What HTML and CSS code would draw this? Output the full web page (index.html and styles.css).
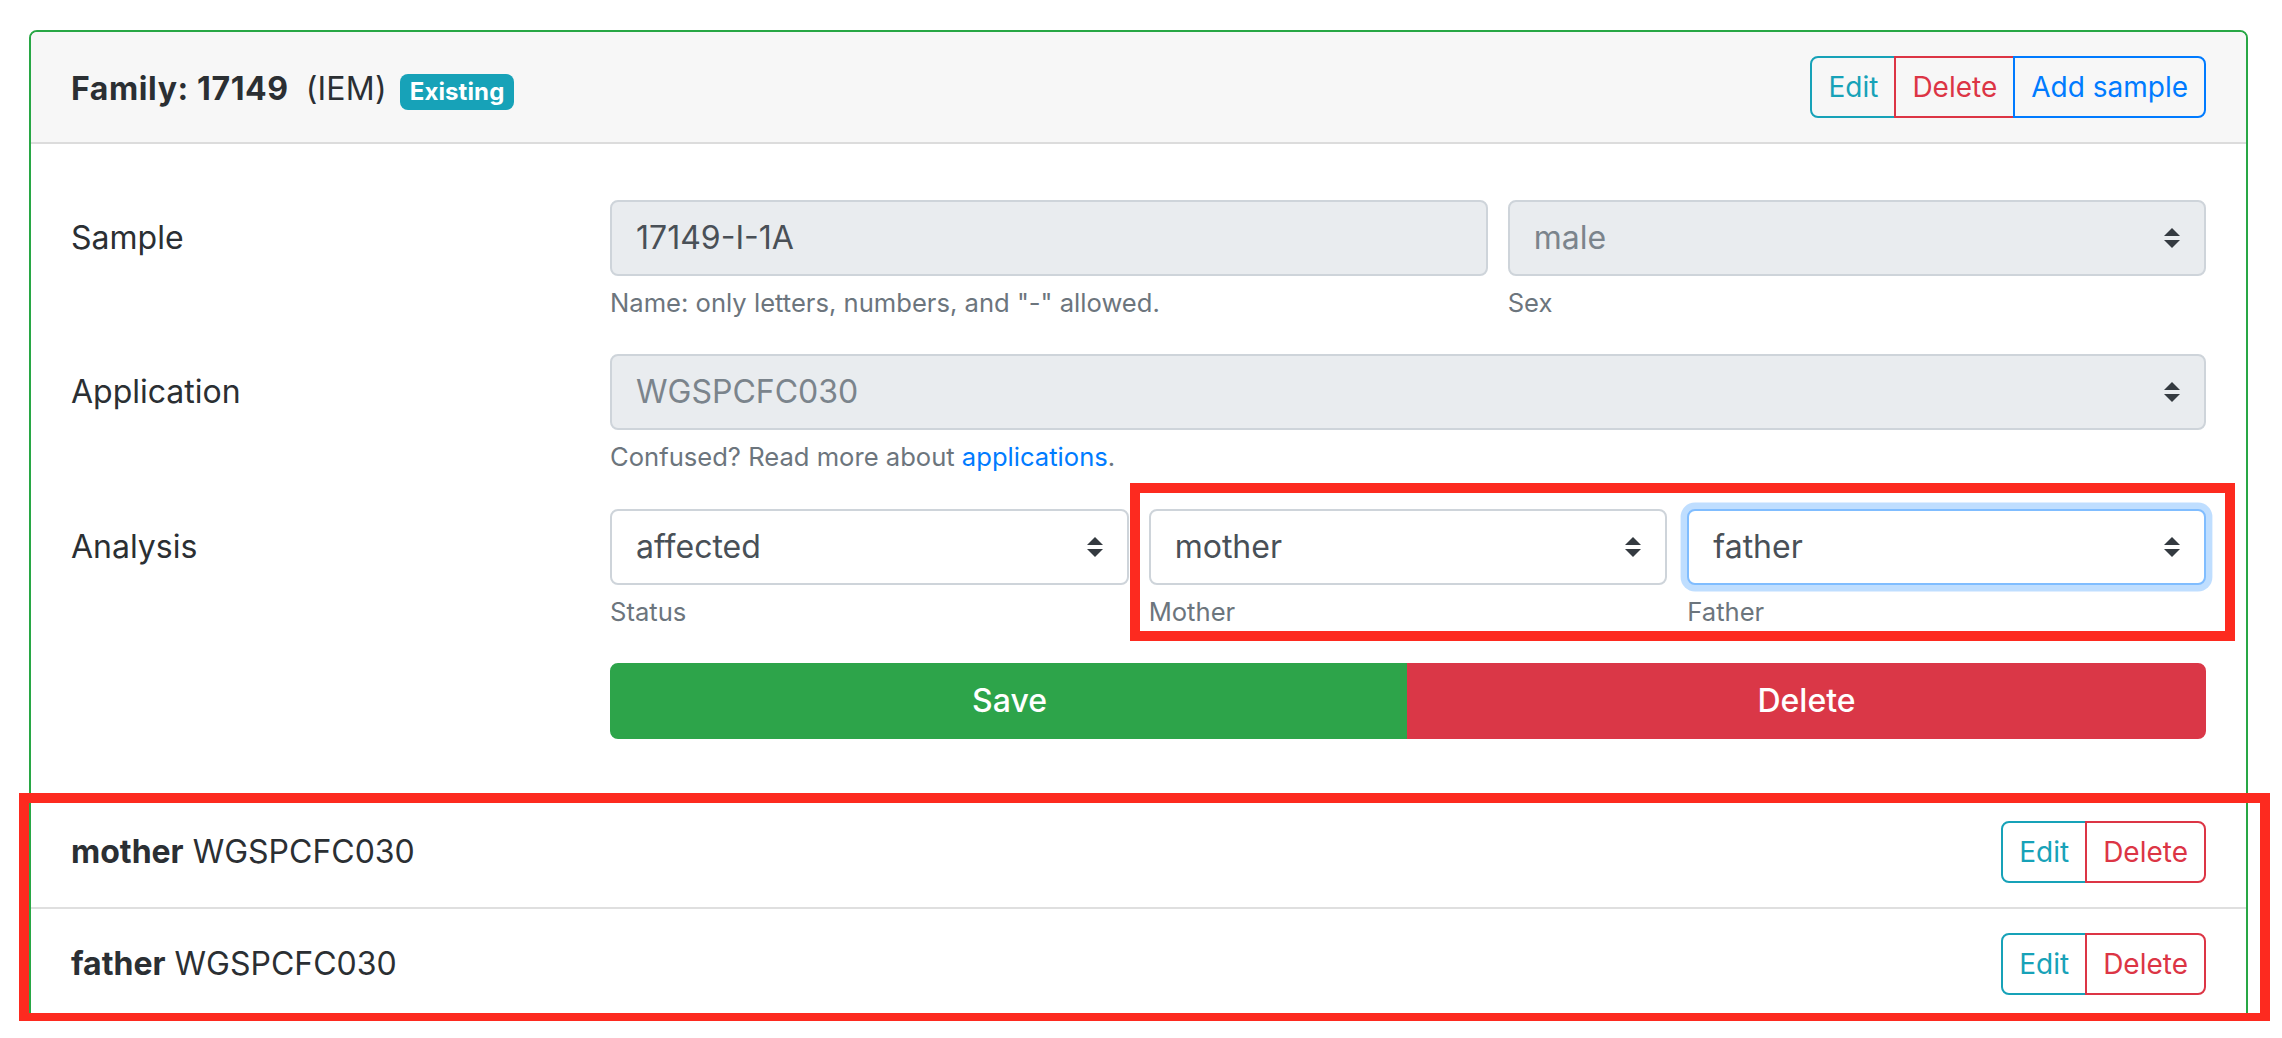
FILE: index.html
```html
<!DOCTYPE html>
<html lang="en">
<head>
<meta charset="utf-8">
<title>Family 17149</title>
<link rel="stylesheet" href="styles.css">
</head>
<body>
<div class="page">
  <div class="card">
    <div class="card-header">
      <div class="title">
        <strong class="family">Family: 17149</strong>
        <span class="customer">(IEM)</span>
        <span class="badge">Existing</span>
      </div>
      <div class="btn-group">
        <button class="btn btn-sm btn-outline-info">Edit</button>
        <button class="btn btn-sm btn-outline-danger">Delete</button>
        <button class="btn btn-sm btn-outline-primary">Add sample</button>
      </div>
    </div>

    <div class="card-body">
      <div class="form-row">
        <label class="col-label">Sample</label>
        <div class="fields fields-sample">
          <div class="field">
            <div class="control readonly">17149-I-1A</div>
            <small class="help">Name: only letters, numbers, and "-" allowed.</small>
          </div>
          <div class="field">
            <div class="control select disabled">
              <span>male</span>
              <svg class="caret" viewBox="0 0 4 5" width="16" height="20"><path d="M2 0L0 2h4zm0 5L0 3h4z"/></svg>
            </div>
            <small class="help">Sex</small>
          </div>
        </div>
      </div>

      <div class="form-row">
        <label class="col-label">Application</label>
        <div class="fields">
          <div class="field">
            <div class="control select disabled">
              <span>WGSPCFC030</span>
              <svg class="caret" viewBox="0 0 4 5" width="16" height="20"><path d="M2 0L0 2h4zm0 5L0 3h4z"/></svg>
            </div>
            <small class="help">Confused? Read more about <a class="link" href="#">applications</a>.</small>
          </div>
        </div>
      </div>

      <div class="form-row">
        <label class="col-label">Analysis</label>
        <div class="fields fields-analysis">
          <div class="field">
            <div class="control select">
              <span>affected</span>
              <svg class="caret" viewBox="0 0 4 5" width="16" height="20"><path d="M2 0L0 2h4zm0 5L0 3h4z"/></svg>
            </div>
            <small class="help">Status</small>
          </div>
          <div class="field">
            <div class="control select">
              <span>mother</span>
              <svg class="caret" viewBox="0 0 4 5" width="16" height="20"><path d="M2 0L0 2h4zm0 5L0 3h4z"/></svg>
            </div>
            <small class="help">Mother</small>
          </div>
          <div class="field">
            <div class="control select focus">
              <span>father</span>
              <svg class="caret" viewBox="0 0 4 5" width="16" height="20"><path d="M2 0L0 2h4zm0 5L0 3h4z"/></svg>
            </div>
            <small class="help">Father</small>
          </div>
        </div>
      </div>

      <div class="form-row form-row-last">
        <span class="col-label"></span>
        <div class="btn-group btn-group-block">
          <button class="btn btn-success">Save</button>
          <button class="btn btn-danger">Delete</button>
        </div>
      </div>
    </div>

    <ul class="list-group">
      <li class="list-item">
        <span><strong>mother</strong> WGSPCFC030</span>
        <div class="btn-group">
          <button class="btn btn-sm btn-outline-info">Edit</button>
          <button class="btn btn-sm btn-outline-danger">Delete</button>
        </div>
      </li>
      <li class="list-item">
        <span><strong>father</strong> WGSPCFC030</span>
        <div class="btn-group">
          <button class="btn btn-sm btn-outline-info">Edit</button>
          <button class="btn btn-sm btn-outline-danger">Delete</button>
        </div>
      </li>
    </ul>
  </div>

  <div class="annot annot-parents"></div>
  <div class="annot annot-list"></div>
</div>
</body>
</html>
```

FILE: styles.css
```css
* {
  box-sizing: border-box;
}

html,
body {
  margin: 0;
  padding: 0;
  background: #fff;
}

body {
  font-family: Inter, Roboto, "Liberation Sans", Arial, sans-serif;
  font-size: 32px;
  line-height: 1.5;
  color: #2b2f33;
}

.page {
  position: relative;
  padding: 30px 34px 0 29px;
}

/* Card */
.card {
  border: 2px solid #28a745;
  border-radius: 8px;
  overflow: hidden;
  background: #fff;
}

.card-header {
  display: flex;
  align-items: center;
  justify-content: space-between;
  padding: 24px 40px;
  background: #f7f7f7;
  border-bottom: 2px solid #dcdcdc;
}

.title {
  display: flex;
  align-items: baseline;
  padding-top: 4px;
}

.family {
  font-weight: 700;
  letter-spacing: 0.6px;
}

.customer {
  margin-left: 17px;
  letter-spacing: 0.2px;
}

.badge {
  margin-left: 13px;
  font-size: 24px;
  font-weight: 700;
  line-height: 1;
  padding: 6px 10px;
  border-radius: 8px;
  background: #17a2b8;
  color: #fff;
  letter-spacing: 0.1px;
}

/* Buttons */
.btn-group {
  display: inline-flex;
}

.btn {
  font-family: inherit;
  font-size: 32px;
  line-height: 1.5;
  padding: 12px 24px;
  margin: 0;
  border: 2px solid transparent;
  border-radius: 0;
  background: transparent;
  cursor: pointer;
}

.btn-sm {
  font-size: 28px;
  padding: 8px 16px;
}

.btn-group .btn + .btn {
  margin-left: -2px;
}

.btn-group .btn:first-child {
  border-top-left-radius: 8px;
  border-bottom-left-radius: 8px;
}

.btn-group .btn:last-child {
  border-top-right-radius: 8px;
  border-bottom-right-radius: 8px;
}

.btn-outline-info {
  color: #17a2b8;
  border-color: #17a2b8;
}

.btn-outline-danger {
  color: #dc3545;
  border-color: #dc3545;
}

.btn-outline-primary {
  color: #007bff;
  border-color: #007bff;
}

.btn-success {
  color: #fff;
  font-weight: 500;
  background: #2da44a;
  border-color: #2da44a;
}

.btn-danger {
  color: #fff;
  font-weight: 500;
  background: #da3747;
  border-color: #da3747;
}

.btn-group-block {
  display: flex;
}

.btn-group-block .btn {
  flex: 1 1 0;
}

/* Form */
.card-body {
  padding: 56px 40px 56px;
}

.form-row {
  display: grid;
  grid-template-columns: 519px 1fr;
  column-gap: 20px;
  margin-bottom: 32px;
}

.form-row-last {
  margin-bottom: 0;
}

.col-label {
  padding-top: 14px;
  line-height: 48px;
}

.fields {
  display: grid;
  grid-template-columns: 1fr;
  column-gap: 20px;
}

.fields-sample {
  grid-template-columns: 438fr 348.5fr;
}

.fields-analysis {
  grid-template-columns: 1fr 1fr 1fr;
}

.control {
  height: 76px;
  padding: 12px 24px;
  border: 2px solid #ced4da;
  border-radius: 8px;
  font-size: 32px;
  line-height: 48px;
  color: #495057;
  background: #fff;
}

.control.readonly {
  background: #e9ecef;
}

.control.select {
  display: flex;
  align-items: center;
  justify-content: space-between;
}

.control.disabled {
  background: #e9ecef;
  color: #7b848c;
}

.control.focus {
  border-color: #80bdff;
  box-shadow: 0 0 0 6.4px rgba(0, 123, 255, 0.25);
}

.caret {
  flex: none;
  fill: #343a40;
}

.help {
  display: block;
  margin-top: 8px;
  font-size: 25.6px;
  line-height: 1.5;
  color: #6c757d;
}

.link {
  color: #007bff;
  text-decoration: none;
}

/* List */
.list-group {
  list-style: none;
  margin: 0;
  padding: 0;
}

.list-item {
  display: flex;
  align-items: center;
  justify-content: space-between;
  padding: 24px 40px;
  border-top: 2px solid #dfdfdf;
}

/* Annotation boxes drawn over the screenshot */
.annot {
  position: absolute;
  border: 10px solid #fd2a1f;
  pointer-events: none;
}

.annot-parents {
  left: 1130px;
  top: 483px;
  width: 1105px;
  height: 158px;
}

.annot-list {
  left: 19px;
  top: 793px;
  width: 2251px;
  height: 230px;
}
```
